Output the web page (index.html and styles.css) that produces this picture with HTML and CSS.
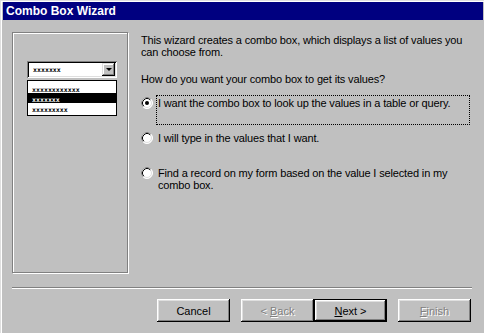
FILE: index.html
```html
<!DOCTYPE html>
<html lang="en">
<head>
  <meta charset="UTF-8">
  <title>Combo Box Wizard</title>
  <link rel="stylesheet" href="styles.css">
</head>
<body>
  <div class="window">
    <div class="titlebar">Combo Box Wizard</div>

    <div class="content">
      <!-- Preview picture on the left -->
      <div class="preview">
        <div class="combo">
          <span class="fake">xxxxxxx</span>
          <span class="drop-btn"><span class="arrow"></span></span>
        </div>
        <div class="list">
          <div class="item"><span class="fake">xxxxxxxxxxxx</span></div>
          <div class="item selected"><span class="fake">xxxxxxx</span></div>
          <div class="item"><span class="fake">xxxxxxxxx</span></div>
        </div>
      </div>

      <!-- Question and choices -->
      <div class="main">
        <p>This wizard creates a combo box, which displays a list of values you<br>can choose from.</p>
        <p class="question">How do you want your combo box to get its values?</p>

        <div class="options">
          <div class="option">
            <svg class="radio" width="12" height="12" viewBox="0 0 12 12">
              <circle cx="6" cy="6" r="5.5" fill="#fff" stroke="#fff"/>
              <path d="M2.11 9.89 A5.5 5.5 0 0 1 9.89 2.11" fill="none" stroke="#808080"/>
              <circle cx="6" cy="6" r="4.5" fill="#fff" stroke="#dfdfdf"/>
              <path d="M2.82 9.18 A4.5 4.5 0 0 1 9.18 2.82" fill="none" stroke="#000"/>
              <circle cx="6" cy="6" r="2" fill="#000"/>
            </svg>
            <div class="label focused">I want the combo box to look up the values in a table or query.</div>
          </div>
          <div class="option">
            <svg class="radio" width="12" height="12" viewBox="0 0 12 12">
              <circle cx="6" cy="6" r="5.5" fill="#fff" stroke="#fff"/>
              <path d="M2.11 9.89 A5.5 5.5 0 0 1 9.89 2.11" fill="none" stroke="#808080"/>
              <circle cx="6" cy="6" r="4.5" fill="#fff" stroke="#dfdfdf"/>
              <path d="M2.82 9.18 A4.5 4.5 0 0 1 9.18 2.82" fill="none" stroke="#000"/>
            </svg>
            <div class="label">I will type in the values that I want.</div>
          </div>
          <div class="option">
            <svg class="radio" width="12" height="12" viewBox="0 0 12 12">
              <circle cx="6" cy="6" r="5.5" fill="#fff" stroke="#fff"/>
              <path d="M2.11 9.89 A5.5 5.5 0 0 1 9.89 2.11" fill="none" stroke="#808080"/>
              <circle cx="6" cy="6" r="4.5" fill="#fff" stroke="#dfdfdf"/>
              <path d="M2.82 9.18 A4.5 4.5 0 0 1 9.18 2.82" fill="none" stroke="#000"/>
            </svg>
            <div class="label">Find a record on my form based on the value I selected in my<br>combo box.</div>
          </div>
        </div>
      </div>
    </div>

    <div class="separator"></div>

    <!-- Wizard buttons -->
    <div class="buttons">
      <button class="btn">Cancel</button>
      <button class="btn btn-back" disabled>&lt; <u>B</u>ack</button>
      <button class="btn btn-default"><u>N</u>ext &gt;</button>
      <button class="btn btn-finish" disabled><u>F</u>inish</button>
    </div>
  </div>
</body>
</html>
```

FILE: styles.css
```css
body {
  margin: 0;
  background-color: #c0c0c0;
  font-family: "Liberation Sans", Arial, sans-serif;
  font-size: 11px;
  color: #000;
}

.window {
  height: 333px;
  box-sizing: border-box;
  padding: 2px 1px 0 3px;
  box-shadow: inset 1px 1px #dfdfdf, inset 2px 2px #fff;
}

.titlebar {
  height: 18px;
  line-height: 18px;
  padding-left: 3px;
  background-color: #000080;
  color: #fff;
  font-size: 12px;
  font-weight: bold;
}

.content {
  display: flex;
  padding: 12px 0 0 9px;
}

/* left picture */
.preview {
  width: 116px;
  height: 241px;
  box-sizing: border-box;
  padding: 28px 0 0 14px;
  border: 1px solid #808080;
  box-shadow: inset 1px 1px #fff, 1px 1px #fff;
}

.fake {
  font-family: "DejaVu Sans Mono", monospace;
  font-size: 6.6px;
  font-weight: bold;
}

.combo {
  width: 90px;
  height: 17px;
  box-sizing: border-box;
  display: flex;
  align-items: center;
  padding: 2px 0 2px 6px;
  background-color: #fff;
  box-shadow: inset 1px 1px #808080, inset -1px -1px #fff, inset 2px 2px #000, inset -2px -2px #dfdfdf;
}

.drop-btn {
  margin-left: auto;
  margin-right: 2px;
  width: 13px;
  height: 13px;
  display: flex;
  align-items: center;
  justify-content: center;
  background-color: #c0c0c0;
  box-shadow: inset -1px -1px #000, inset 1px 1px #dfdfdf, inset -2px -2px #808080, inset 2px 2px #fff;
}

.arrow {
  width: 0;
  height: 0;
  border-left: 3px solid transparent;
  border-right: 3px solid transparent;
  border-top: 3px solid #000;
}

.list {
  width: 90px;
  box-sizing: border-box;
  margin-top: 2px;
  padding: 2px 0;
  border: 1px solid #000;
  background-color: #fff;
}

.item {
  height: 10px;
  line-height: 10px;
  padding-left: 4px;
}

.item.selected {
  background-color: #000;
  color: #fff;
}

/* right side */
.main {
  margin-left: 13px;
  padding-top: 2px;
  letter-spacing: -0.15px;
}

.main p {
  margin: 0;
  line-height: 12px;
}

.main .question {
  margin-top: 15px;
}

.options {
  margin-top: 10px;
  display: flex;
  flex-direction: column;
  gap: 5px;
}

.option {
  display: flex;
  align-items: flex-start;
}

.radio {
  margin-top: 2px;
  margin-right: 3px;
  flex-shrink: 0;
}

.label {
  width: 314px;
  height: 30px;
  box-sizing: border-box;
  padding: 1px 1px;
  line-height: 12px;
  border: 1px dotted transparent;
}

.label.focused {
  border-color: #000;
}

.separator {
  margin: 14px 0 0 9px;
  width: 460px;
  border-top: 1px solid #808080;
  border-bottom: 1px solid #fff;
}

.buttons {
  display: flex;
  margin-top: 10px;
  padding-left: 154px;
}

.btn {
  width: 73px;
  height: 23px;
  box-sizing: border-box;
  padding: 0;
  border: none;
  background-color: #c0c0c0;
  font-family: "Liberation Sans", Arial, sans-serif;
  font-size: 11px;
  color: #000;
  box-shadow: inset -1px -1px #000, inset 1px 1px #fff, inset -2px -2px #808080, inset 2px 2px #dfdfdf;
}

.btn-back {
  margin-left: 11px;
}

.btn-finish {
  margin-left: 11px;
}

.btn:disabled {
  color: #808080;
  text-shadow: 1px 1px #fff;
}

.btn-default {
  border: 1px solid #000;
}
```
